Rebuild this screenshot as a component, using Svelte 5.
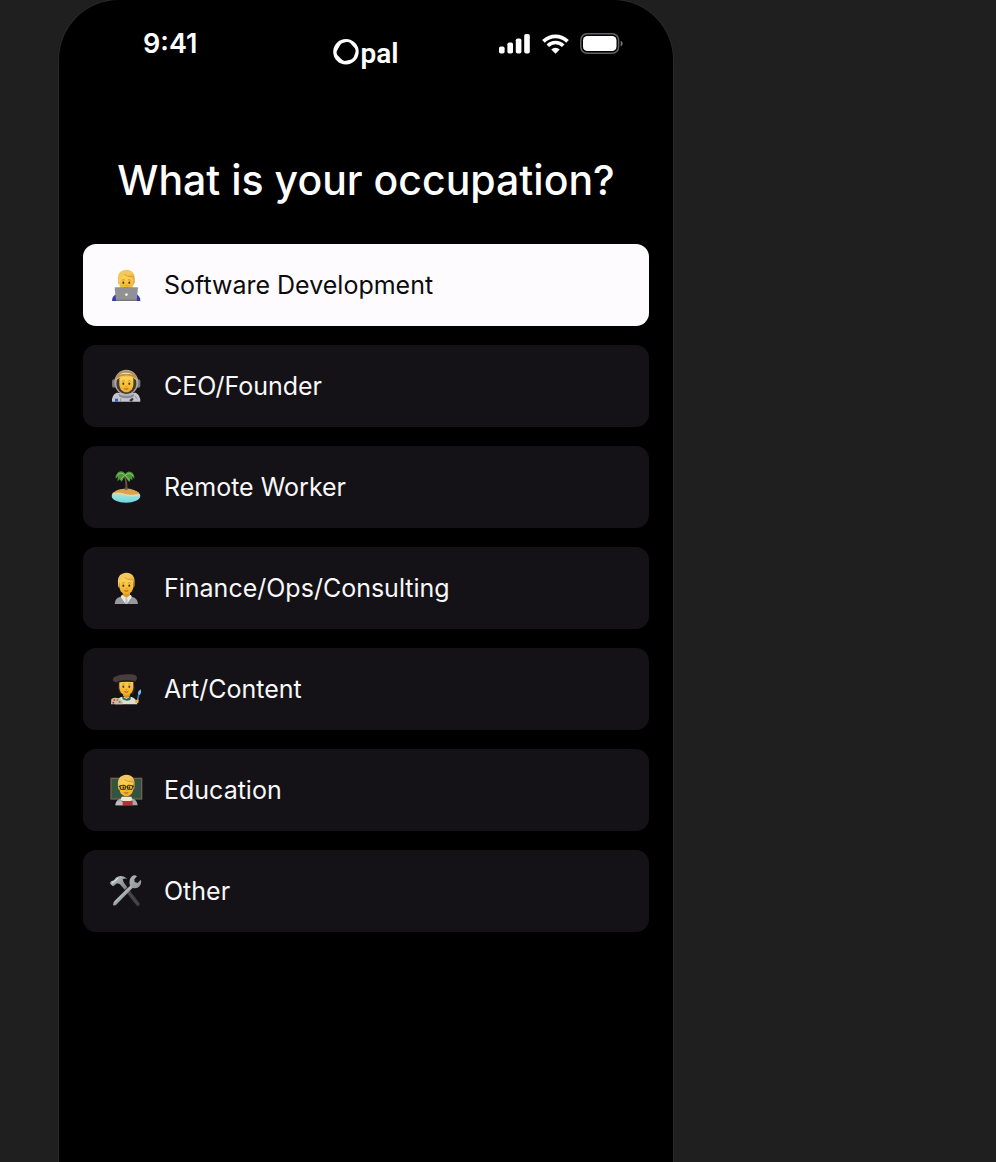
<script>
  const options = [
    { id: 'software', label: 'Software Development' },
    { id: 'founder', label: 'CEO/Founder' },
    { id: 'remote', label: 'Remote Worker' },
    { id: 'finance', label: 'Finance/Ops/Consulting' },
    { id: 'art', label: 'Art/Content' },
    { id: 'education', label: 'Education' },
    { id: 'other', label: 'Other' }
  ];
  let selected = $state('software');
</script>

{#snippet face()}
  <path d="M58 58Q60 42 79 42Q98 42 100 58V75Q98 90 87 95Q79 98 71 95Q60 90 58 75Z" fill="url(#skin)" />
  <ellipse cx="70" cy="71" rx="2.8" ry="3.6" fill="#4d3215" />
  <ellipse cx="88" cy="71" rx="2.8" ry="3.6" fill="#4d3215" />
  <path d="M66 64q4-3 8-1M84 63q4-2 8 1" fill="none" stroke="#b5791b" stroke-width="2" />
  <path d="M77 79q2 2 5 0" fill="none" stroke="#c9841a" stroke-width="2" />
  <path d="M73 86q6 3 12 0" fill="none" stroke="#a4571f" stroke-width="3" />
{/snippet}

{#snippet hair()}
  <path d="M54 70Q51 40 67 35Q79 29 92 35Q106 41 104 70Q103 76 100 78V62Q99 56 95 54Q83 54 74 48Q66 53 61 57Q58 62 58 78Q54 76 54 70Z" fill="url(#hair)" />
  <path d="M73 47Q82 53 96 54" fill="none" stroke="#c9892b" stroke-width="2" />
{/snippet}

<svg class="defs" width="0" height="0" aria-hidden="true">
  <defs>
    <linearGradient id="skin" x2="0" y2="1"><stop stop-color="#ffdc5c" /><stop offset="1" stop-color="#f0aa24" /></linearGradient>
    <linearGradient id="hair" x2="0.6" y2="1"><stop stop-color="#f0c463" /><stop offset=".5" stop-color="#f5c75c" /><stop offset="1" stop-color="#cf9130" /></linearGradient>
    <linearGradient id="metal" x2="1" y2="1"><stop stop-color="#c4ccd0" /><stop offset="1" stop-color="#777c80" /></linearGradient>
    <linearGradient id="sea" x2="0" y2="1"><stop stop-color="#c5ecd2" /><stop offset="1" stop-color="#6fd6e2" /></linearGradient>
  </defs>
</svg>

<main class="stage">
  <section class="phone" aria-labelledby="question">
    <header class="status">
      <span class="time">9:41</span>
      <div class="brand">
        <svg width="27" height="28" viewBox="0 0 27 28" aria-label="O">
          <path fill-rule="evenodd" fill="#fff" d="M13 1A12.7 12.7 0 1 1 12.9 26.5A12.7 12.7 0 0 1 13 1ZM10.5 4.8Q8.3 5.2 7.2 7L3.8 13Q3 15.2 4.3 17L8.8 21.6Q10.5 23.3 13 22.8L18.2 21.4Q20.2 20.8 21 18.6L22.5 14Q23 11.8 21.7 10L17.4 5.2Q15.8 3.7 13.5 4.1Z" />
        </svg>
        <span>pal</span>
      </div>
      <div class="signals">
        <svg width="32" height="20" viewBox="0 0 32 20" fill="#fff" aria-hidden="true">
          <rect x="0" y="12.5" width="5.6" height="7" rx="1.8" />
          <rect x="8.4" y="8.5" width="5.6" height="11" rx="1.8" />
          <rect x="16.8" y="4.5" width="5.6" height="15" rx="1.8" />
          <rect x="25.2" y="0" width="5.6" height="19.5" rx="1.8" />
        </svg>
        <svg width="27" height="20" viewBox="0 0 28 20" fill="none" stroke="#fff" stroke-width="3.8" aria-hidden="true">
          <path d="M1.5 7.3A17.5 17.5 0 0 1 26.5 7.3" />
          <path d="M6 11.8A11.3 11.3 0 0 1 22 11.8" />
          <path d="M9.6 15.8A6.3 6.3 0 0 1 18.4 15.8L14 20Z" fill="#fff" stroke="none" />
        </svg>
        <svg width="43" height="21" viewBox="0 0 43 21" aria-hidden="true">
          <rect x="0.8" y="0.8" width="37.8" height="19.4" rx="6.3" fill="none" stroke="#626064" stroke-width="1.5" />
          <rect x="3" y="3" width="33.5" height="15" rx="4.3" fill="#fff" />
          <path d="M40.7 7.7Q42.7 8.5 42.7 10.5T40.7 13.5Z" fill="#747276" />
        </svg>
      </div>
    </header>

    <h1 id="question">What is your occupation?</h1>

    <div class="options" role="radiogroup" aria-labelledby="question">
      {#each options as option}
        <label class="option" class:active={selected === option.id}>
          <input type="radio" name="occupation" value={option.id} bind:group={selected} />
          <svg class="icon" viewBox="24 24 108 108" aria-hidden="true">
            {#if option.id === 'software'}
              <path d="M36 126Q36 112 48 106H110Q121 112 121 126Z" fill="#3338b5" />
              {@render face()}
              {@render hair()}
              <path d="M46 85H112Q115 85 114 88L110 124Q110 126 107 126H51Q48 126 48 124L44 88Q43 85 46 85Z" fill="#919195" />
              <path d="M48 122H110V126H48Z" fill="#77777b" />
              <path d="M79 104q-4-2-4 2t4 5q4 0 4-5t-4-2" fill="#fff" />
            {:else if option.id === 'founder'}
              <path d="M36 125Q35 104 50 98H107Q122 106 121 125Z" fill="#c4c4cc" />
              <rect x="36" y="58" width="12" height="25" rx="6" fill="#77787d" />
              <rect x="109" y="58" width="12" height="25" rx="6" fill="#77787d" />
              <ellipse cx="79" cy="67" rx="36" ry="38" fill="#aaa8a3" />
              <ellipse cx="79" cy="71" rx="30" ry="31" fill="#443b32" />
              <path d="M55 101Q79 114 103 101L100 110Q79 119 59 110Z" fill="#888a94" />
              {@render face()}
              <path d="M46 61Q49 34 79 32Q109 34 112 61Q106 53 98 52Q79 46 60 52Q52 53 46 61Z" fill="#bc914c" />
              <path d="M57 45Q77 32 100 45Q79 38 57 45Z" fill="#fff1ba" />
              <path d="M47 59Q79 36 111 59" fill="none" stroke="#edc66f" stroke-width="3" />
              <path d="M45 116h9v9h-9z" fill="#315ec0" />
              <path d="M87 121l10-8 4 4-6 8z" fill="#34333b" />
              <path d="M62 115v10M105 108l7 10" stroke="#8b8c98" stroke-width="3" />
            {:else if option.id === 'remote'}
              <ellipse cx="78" cy="105" rx="43" ry="20" fill="url(#sea)" />
              <path d="M38 98Q49 85 66 84Q83 80 99 86Q116 91 118 100Q98 103 83 101Q58 95 38 98Z" fill="#d8a34c" />
              <path d="M38 98Q60 94 80 102Q100 106 118 100" fill="none" stroke="#ecd49a" stroke-width="4" />
              <path d="M75 43Q84 64 83 86L75 87Q79 65 71 44Z" fill="#795840" />
              <path d="M77 62h5M78 69h5M77 76h5" stroke="#4c3528" stroke-width="2" />
              <path d="M76 39Q69 25 54 34L47 44L47 53L54 47L52 61L61 53L63 63Q70 57 73 45Q78 49 80 54L88 64L91 53L97 58L97 47L103 54Q104 38 93 33Q82 28 76 39Z" fill="#4e963e" />
              <path d="M74 42Q62 31 52 43M75 43Q91 31 99 45M75 43L61 56M76 43L89 58" fill="none" stroke="#8ac66a" stroke-width="3" />
            {:else if option.id === 'finance'}
              <path d="M44 126Q45 108 60 105L79 100L98 105Q113 110 114 126Z" fill="#98989d" />
              <path d="M65 99H93L96 107L82 126H76L61 107Z" fill="#eae8e5" />
              <path d="M77 107h5l2 19h-9z" fill="#bec4c7" />
              <path d="M61 105L75 126M97 105L83 126" fill="none" stroke="#74767c" stroke-width="2" />
              <path d="M68 86H90V100L79 107L68 100Z" fill="#db9828" />
              {@render face()}
              {@render hair()}
            {:else if option.id === 'art'}
              <path d="M45 124Q48 108 63 102H95Q109 106 112 124Z" fill="#deddd7" />
              <path d="M66 100L79 108L93 100L91 111L80 113L68 109Z" fill="#236b46" />
              <path d="M57 54Q50 76 58 88L67 96V58ZM96 55L105 74L101 92L90 96Z" fill="#38251f" />
              <path d="M69 86H90V100L79 106L69 99Z" fill="#d99222" />
              {@render face()}
              <path d="M38 52Q37 42 53 38Q66 32 95 34Q112 36 111 46Q109 58 96 57Q75 55 54 58Q43 60 38 52Z" fill="#493c3b" />
              <path d="M52 57Q80 51 104 56" fill="none" stroke="#211d20" stroke-width="4" />
              <path d="M34 108Q46 101 59 108Q71 113 68 124H33Z" fill="#d8bc91" />
              <circle cx="43" cy="111" r="3" fill="#d24439" /><circle cx="52" cy="111" r="3" fill="#5f9d4d" /><circle cx="59" cy="117" r="3" fill="#5279c8" /><circle cx="40" cy="119" r="3" fill="#7a3c91" />
              <path d="M111 119L117 91" stroke="#427db5" stroke-width="5" />
              <path d="M114 94Q113 85 121 79Q127 87 119 96Z" fill="#75bce1" />
              <path d="M105 120Q106 108 116 110L115 120Z" fill="#f1b52e" />
            {:else if option.id === 'education'}
              <rect x="31" y="41" width="96" height="66" fill="#70624b" />
              <rect x="35" y="45" width="88" height="58" fill="#345442" />
              <path d="M46 124Q46 109 60 104H99Q112 109 113 124Z" fill="#a7a8ac" />
              <path d="M65 98H94L97 107L80 116L62 107Z" fill="#eee9db" />
              {@render face()}
              {@render hair()}
              <path d="M60 65H76V76H62ZM82 65H98L96 76H83ZM76 69H82M56 67L60 68M98 68L102 67" fill="none" stroke="#433015" stroke-width="3" />
              <path d="M65 111H98V124H65Z" fill="#b73032" />
              <path d="M48 115Q60 108 68 114V124H47Z" fill="#bdbdc0" />
            {:else}
              <path d="M73 75L82 67L119 115Q120 123 113 124L109 121Z" fill="#3c3c41" />
              <path d="M79 73L113 118" stroke="#5c5c61" stroke-width="2" />
              <path d="M39 119Q38 112 47 104L90 62Q85 44 96 34Q104 28 111 34L103 43L104 51L113 54L122 44Q127 55 117 65Q110 71 98 69L53 115Q44 126 39 119Z" fill="url(#metal)" />
              <path d="M31 57Q29 51 35 48L42 46Q48 34 61 33Q73 32 82 42Q74 38 68 43L71 52L82 67L74 74L59 57L51 55L39 64Z" fill="url(#metal)" />
              <path d="M43 113L94 65" stroke="#d3d6d8" stroke-width="2" />
              <path d="M36 53Q48 48 54 39" fill="none" stroke="#edf0ef" stroke-width="3" />
            {/if}
          </svg>
          <span>{option.label}</span>
        </label>
      {/each}
    </div>
  </section>
</main>

<style>
  :global(body) {
    margin: 0;
    background: #1f1f1f;
  }
  .defs {
    position: absolute;
  }
  .stage {
    display: flex;
    box-sizing: border-box;
    min-height: 100vh;
    padding-left: 59px;
    font-family: Inter, "Liberation Sans", sans-serif;
    color: #fff;
  }
  .phone {
    flex: 0 1 614px;
    box-sizing: border-box;
    padding: 32px 24px 48px;
    border-radius: 60px 60px 0 0;
    background: #000;
    box-shadow: 0 0 0 1px #292929;
  }
  .status {
    display: grid;
    grid-template-columns: 1fr auto 1fr;
    align-items: start;
    padding: 0 26px;
    height: 40px;
  }
  .time {
    padding-left: 34px;
    font-size: 27px;
    font-weight: 600;
    line-height: 24px;
  }
  .brand {
    display: flex;
    align-items: start;
    padding-top: 6px;
    font-family: Roboto, "Liberation Sans", sans-serif;
    font-size: 28px;
    font-weight: 600;
    line-height: 32px;
  }
  .signals {
    display: flex;
    justify-content: flex-end;
    align-items: center;
    gap: 11px;
    padding-top: 1px;
  }
  h1 {
    margin: 84px 0 39px;
    font-size: 41px;
    font-weight: 500;
    line-height: 49px;
    text-align: center;
  }
  .options {
    display: grid;
    gap: 19px;
  }
  .option {
    position: relative;
    display: flex;
    align-items: center;
    gap: 20px;
    min-height: 82px;
    padding: 0 25px;
    box-sizing: border-box;
    border-radius: 13px;
    background: #141216;
    color: #f8f7f9;
    font-size: 25px;
    line-height: 32px;
    cursor: pointer;
  }
  .active {
    background: #fdfbfd;
    color: #0c0b0d;
  }
  .option:focus-within:has(:focus-visible) {
    outline: 2px solid #8b8b90;
    outline-offset: 2px;
  }
  input {
    position: absolute;
    opacity: 0;
    margin: 0;
    pointer-events: none;
  }
  .icon {
    flex: none;
    width: 36px;
    height: 36px;
  }
</style>
